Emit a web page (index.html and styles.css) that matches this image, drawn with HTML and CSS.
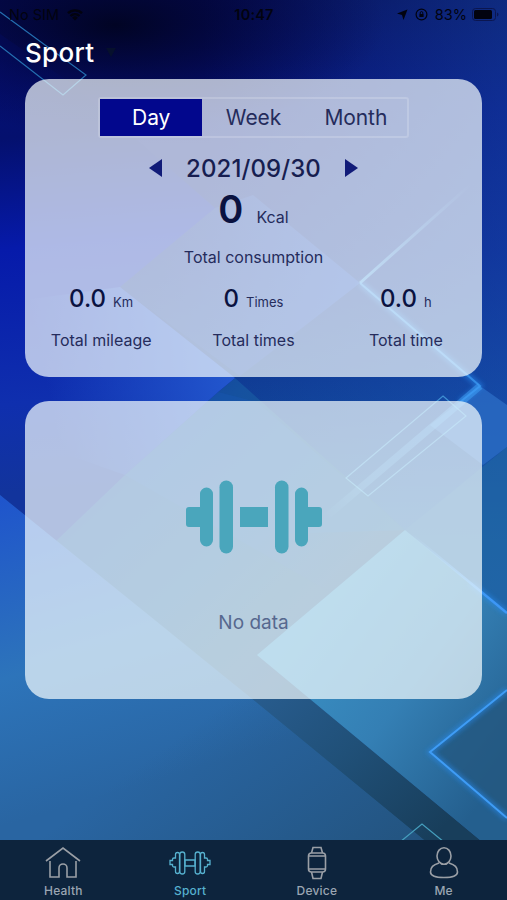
FILE: index.html
```html
<!DOCTYPE html>
<html lang="en">
<head>
  <meta charset="UTF-8" />
  <meta name="viewport" content="width=device-width, initial-scale=1.0" />
  <title>Sport</title>
  <link rel="stylesheet" href="styles.css">
</head>
<body>
  <svg class="backdrop" viewBox="0 0 507 900" preserveAspectRatio="none" aria-hidden="true">
    <defs>
      <linearGradient id="base" x1="0" y1="0" x2="0" y2="1">
        <stop offset="0" stop-color="#050a55" />
        <stop offset="0.12" stop-color="#061078" />
        <stop offset="0.28" stop-color="#0a2088" />
        <stop offset="0.45" stop-color="#103f94" />
        <stop offset="0.6" stop-color="#1c619b" />
        <stop offset="0.8" stop-color="#2867a0" />
        <stop offset="1" stop-color="#205078" />
      </linearGradient>
      <linearGradient id="right" x1="0" y1="0" x2="1" y2="0">
        <stop offset="0.4" stop-color="#1d62c5" stop-opacity="0" />
        <stop offset="1" stop-color="#1d5cc0" stop-opacity="0.4" />
      </linearGradient>
      <radialGradient id="night">
        <stop offset="0" stop-color="#010424" />
        <stop offset="1" stop-color="#020640" stop-opacity="0" />
      </radialGradient>
      <linearGradient id="violet" x1="0" y1="50" x2="40" y2="490" gradientUnits="userSpaceOnUse">
        <stop offset="0" stop-color="#050f7a" />
        <stop offset="0.2" stop-color="#04106e" />
        <stop offset="0.45" stop-color="#061aaa" />
        <stop offset="0.8" stop-color="#0f2fae" />
        <stop offset="1" stop-color="#12349c" />
      </linearGradient>
      <linearGradient id="mid" x1="50" y1="400" x2="235" y2="360" gradientUnits="userSpaceOnUse">
        <stop offset="0" stop-color="#2358cf" stop-opacity="0" />
        <stop offset="1" stop-color="#2358cf" />
      </linearGradient>
      <linearGradient id="centre" x1="130" y1="0" x2="350" y2="0" gradientUnits="userSpaceOnUse">
        <stop offset="0" stop-color="#1742b8" stop-opacity="0.1" />
        <stop offset="1" stop-color="#1a48c4" />
      </linearGradient>
      <linearGradient id="steel" x1="60" y1="400" x2="280" y2="640" gradientUnits="userSpaceOnUse">
        <stop offset="0" stop-color="#12349c" />
        <stop offset="0.35" stop-color="#15519f" />
        <stop offset="1" stop-color="#1f6494" />
      </linearGradient>
      <linearGradient id="low" x1="0" y1="500" x2="90" y2="800" gradientUnits="userSpaceOnUse">
        <stop offset="0" stop-color="#1f55cc" />
        <stop offset="0.55" stop-color="#2d74ba" />
        <stop offset="1" stop-color="#2965a2" />
      </linearGradient>
      <linearGradient id="lowShade" x1="230" y1="700" x2="360" y2="880" gradientUnits="userSpaceOnUse">
        <stop offset="0" stop-color="#235480" stop-opacity="0" />
        <stop offset="1" stop-color="#235480" />
      </linearGradient>
      <linearGradient id="band" x1="190" y1="590" x2="430" y2="840" gradientUnits="userSpaceOnUse">
        <stop offset="0" stop-color="#285c8e" stop-opacity="0" />
        <stop offset="0.35" stop-color="#285c8e" />
        <stop offset="0.65" stop-color="#205078" />
        <stop offset="1" stop-color="#183e5b" />
      </linearGradient>
      <linearGradient id="aqua" x1="290" y1="640" x2="490" y2="790" gradientUnits="userSpaceOnUse">
        <stop offset="0" stop-color="#3a91c5" />
        <stop offset="0.5" stop-color="#347fb4" />
        <stop offset="1" stop-color="#245f8e" />
      </linearGradient>
      <linearGradient id="beam" x1="470" y1="185" x2="360" y2="283" gradientUnits="userSpaceOnUse">
        <stop offset="0" stop-color="#4da3ea" stop-opacity="0" />
        <stop offset="1" stop-color="#4da3ea" stop-opacity="0.8" />
      </linearGradient>
      <linearGradient id="tail" x1="480" y1="386" x2="325" y2="518" gradientUnits="userSpaceOnUse">
        <stop offset="0" stop-color="#3f9ff5" />
        <stop offset="0.7" stop-color="#4fa5e6" stop-opacity="0.7" />
        <stop offset="1" stop-color="#5bb5ee" stop-opacity="0" />
      </linearGradient>
      <linearGradient id="edge" x1="410" y1="533" x2="507" y2="613" gradientUnits="userSpaceOnUse">
        <stop offset="0" stop-color="#4aa8fb" stop-opacity="0" />
        <stop offset="0.8" stop-color="#3d97f6" />
      </linearGradient>
      <filter id="glow" x="-30%" y="-30%" width="160%" height="160%">
        <feGaussianBlur stdDeviation="2.5" />
      </filter>
    </defs>

    <rect width="507" height="900" fill="url(#base)" />
    <rect width="507" height="900" fill="url(#right)" />

    <!-- lower card facets -->
    <path d="M0 420 218 392 235 378 405 530 257 655 424 840 250 697 0 495Z" fill="url(#steel)" />
    <path d="M218 392 257 402 405 530 330 592 125 475Z" fill="#1c5cc0" opacity="0.25" />

    <!-- left facets -->
    <path d="M0 34 75 86 215 208 120 287 235 378 218 392 125 475 56 541 0 495Z" fill="url(#violet)" />
    <path d="M120 287 235 378 218 392 125 475 25 440V300Z" fill="url(#mid)" />
    <ellipse cx="115" cy="25" rx="270" ry="110" fill="url(#night)" />

    <!-- centre facets -->
    <path d="M215 208 253 195 360 283 240 376 120 287Z" fill="url(#centre)" opacity="0.7" />
    <path d="M480 386 507 405V447L483 465 430 425Z" fill="#2a6cc4" opacity="0.8" />
    <path d="M507 447V613L405 530Z" fill="#2267a4" opacity="0.6" />

    <!-- lower facets -->
    <path d="M0 495 250 697 424 840V900H0Z" fill="url(#low)" />
    <path d="M0 495 250 697 424 840V900H0Z" fill="url(#lowShade)" />
    <path d="M56 541 405 530 257 655 480 840V900H424V840L250 697Z" fill="url(#band)" />
    <path d="M257 655 405 530 507 613V861L480 840Z" fill="url(#aqua)" />
    <path d="M507 690 430 752 507 818Z" fill="#24577f" opacity="0.8" />

    <!-- light beams -->
    <g fill="none" stroke="#278cf2" stroke-width="5" opacity="0.6" filter="url(#glow)">
      <path d="M360 283 480 386 460 402" />
      <path d="M470 583 507 613" />
      <path d="M507 690 430 752 507 818" />
    </g>
    <path d="M470 185 360 283" fill="none" stroke="url(#beam)" stroke-width="3" />
    <path d="M480 386 325 518" fill="none" stroke="url(#tail)" stroke-width="7" opacity="0.5" />
    <path d="M410 533 507 613" fill="none" stroke="url(#edge)" stroke-width="2.5" />
    <g fill="none" stroke="#3f9cf5" stroke-width="2">
      <path d="M360 283 480 386 460 402" opacity="0.7" />
      <path d="M507 690 430 752 507 818" />
    </g>
    <g fill="none" stroke="#55b5ed" stroke-width="1.2">
      <path d="M0 12 86 75 63 95 0 46" stroke="#246fb0" />
      <path d="M443 396 466 416 368 496 346 478Z" opacity="0.65" />
      <path d="M400 842 422 824 444 842" stroke="#459ebd" />
    </g>
  </svg>

  <div class="status-bar">
    <div class="carrier">
      <span>No SIM</span>
      <svg width="18" height="13" viewBox="0 0 18 13"><path d="M9 12.5 6.2 9.7a4 4 0 0 1 5.6 0Z" /><path d="M4.5 8a6.4 6.4 0 0 1 9 0M2 5.2a10 10 0 0 1 14 0" fill="none" stroke="#02030f" stroke-width="2.4" /></svg>
    </div>
    <div class="time">10:47</div>
    <div class="battery">
      <svg width="11" height="11" viewBox="0 0 11 11"><path d="M10.5.5 6.5 11 5 6 0 4.6Z" /></svg>
      <svg width="13" height="13" viewBox="0 0 13 13"><circle cx="6.5" cy="6.5" r="5.4" fill="none" stroke="#02030f" stroke-width="1.2" /><path d="M4.4 6h4.2v3H4.4Z" /><path d="M5.2 6V4.9a1.3 1.3 0 0 1 2.6 0V6" fill="none" stroke="#02030f" /></svg>
      <span>83%</span>
      <svg class="level" width="27" height="13" viewBox="0 0 27 13"><rect x=".5" y=".5" width="23" height="12" rx="3" fill="none" stroke="#0b1650" /><rect x="2" y="2" width="18" height="9" rx="1.5" /><path d="M25 4.5c2 .8 2 3.2 0 4Z" fill="#0b1650" /></svg>
    </div>
  </div>

  <header>
    <h1>Sport</h1>
    <span class="caret"></span>
  </header>

  <main>
    <section class="card summary">
      <div class="tabs">
        <button class="tab active">Day</button>
        <button class="tab">Week</button>
        <button class="tab">Month</button>
      </div>
      <div class="date-picker">
        <span class="arrow prev"></span>
        <span class="date">2021/09/30</span>
        <span class="arrow next"></span>
      </div>
      <div class="calories"><strong>0</strong><span>Kcal</span></div>
      <p class="label">Total consumption</p>
      <div class="stats">
        <div class="stat">
          <div class="value"><b>0.0</b><span>Km</span></div>
          <p class="label">Total mileage</p>
        </div>
        <div class="stat">
          <div class="value"><b>0</b><span>Times</span></div>
          <p class="label">Total times</p>
        </div>
        <div class="stat">
          <div class="value"><b>0.0</b><span>h</span></div>
          <p class="label">Total time</p>
        </div>
      </div>
    </section>

    <section class="card empty">
      <svg width="136" height="74" viewBox="0 0 136 74" fill="#4aa6bc">
        <path d="M14 27V14a6.5 6.5 0 0 1 13 0v46a6.5 6.5 0 0 1-13 0V47H3a3 3 0 0 1-3-3V30a3 3 0 0 1 3-3Z" />
        <rect x="33.5" y=".5" width="13.5" height="73" rx="6.7" />
        <path d="M54 27h28v20H54Z" />
        <rect x="89" y=".5" width="13.5" height="73" rx="6.7" />
        <path d="M122 27V14a6.5 6.5 0 0 0-13 0v46a6.5 6.5 0 0 0 13 0V47h11a3 3 0 0 0 3-3V30a3 3 0 0 0-3-3Z" />
      </svg>
      <p>No data</p>
    </section>
  </main>

  <nav>
    <a href="#">
      <svg width="36" height="34" viewBox="0 0 36 34"><path d="M1 15 18 2l17 13M5 15v16h9V22a4 4 0 0 1 8 0v9h9V15" /></svg>
      <span>Health</span>
    </a>
    <a href="#" class="current">
      <svg width="42" height="34" viewBox="0 0 42 34"><path d="M10.5 8.5a2 2 0 0 0-4 0V12H5a1.5 1.5 0 0 0-1.5 1.500V14.500H1v4h2.500v1A1.500 1.500 0 0 0 5 21h1.500v4.500a2 2 0 0 0 4 0ZM16 14h10v6H16ZM31.500 8.500a2 2 0 0 1 4 0V12H37a1.500 1.500 0 0 1 1.500 1.500V14.500H41v4h-2.500v1A1.500 1.500 0 0 1 37 21h-1.500v4.500a2 2 0 0 1-4 0Z" /><rect x="10.800" y="6" width="5" height="22" rx="2.500" /><rect x="26.200" y="6" width="5" height="22" rx="2.500" /></svg>
      <span>Sport</span>
    </a>
    <a href="#">
      <svg width="20" height="34" viewBox="0 0 20 34"><path d="M4.500 7 6 1.500h8L15.500 7M4.500 26 6 32.500h8l1.500-6.500" /><rect x="1.500" y="7" width="17" height="19" rx="3" /><path d="M2 10h16M2 23h16" /></svg>
      <span>Device</span>
    </a>
    <a href="#">
      <svg width="30" height="34" viewBox="0 0 30 34"><ellipse cx="15" cy="10" rx="7" ry="8.300" /><path d="M10 17C4 19 1.500 21 1.500 26c0 3.500 5 5.500 13.500 5.500S28.500 29.500 28.500 26c0-5-2.500-7-8.500-9" /></svg>
      <span>Me</span>
    </a>
  </nav>
</body>
</html>
```

FILE: styles.css
```css
* {
  margin: 0;
  padding: 0;
  box-sizing: border-box;
}

body {
  font-family: Inter, 'Liberation Sans', sans-serif;
  height: 100vh;
  overflow: hidden;
  display: flex;
  flex-direction: column;
  color: #252c5c;
  background: #061078;
  position: relative;
}

.backdrop {
  position: absolute;
  inset: 0;
  width: 100%;
  height: 100%;
  z-index: -1;
}

.status-bar {
  height: 28px;
  padding: 0 8px 0 9px;
  display: grid;
  grid-template-columns: 1fr auto 1fr;
  align-items: center;
  font-size: 14.5px;
  color: #02030f;
  fill: #02030f;
}

.carrier,
.battery {
  display: flex;
  align-items: center;
  gap: 7px;
}

.battery {
  justify-content: flex-end;
}

.battery .level {
  margin-left: -2px;
}

.time {
  font-weight: 600;
  letter-spacing: 0.2px;
}

header {
  height: 51px;
  padding: 0 25px 2px;
  display: flex;
  align-items: center;
  gap: 12px;
  color: #fff;
}

header h1 {
  font-size: 26px;
  font-weight: 500;
  letter-spacing: 0.3px;
}

.caret {
  border: 5px solid transparent;
  border-top: 9px solid #06102c;
  border-bottom: 0;
}

main {
  flex: 1;
  padding: 0 25px;
}

.card {
  height: 298px;
  border-radius: 24px;
  background: rgba(246, 253, 255, 0.7);
}

.summary {
  padding-top: 18px;
  margin-bottom: 24px;
  text-align: center;
}

.tabs {
  display: flex;
  width: 311px;
  height: 41px;
  margin: 0 auto;
  border: 2px solid rgba(255, 255, 255, 0.18);
  border-radius: 3px;
}

.tab {
  flex: 1;
  border: 0;
  background: none;
  font: 400 21px Inter, sans-serif;
  letter-spacing: -0.1px;
  color: inherit;
}

.tab.active {
  background: #02078d;
  color: #fff;
}

.date-picker {
  height: 41px;
  margin-top: 9px;
  padding-top: 1px;
  display: flex;
  align-items: center;
  justify-content: center;
  gap: 24px;
}

.date {
  font-size: 24px;
  font-weight: 500;
  letter-spacing: 0.1px;
  color: #171e50;
}

.arrow {
  border: 9px solid transparent;
}

.prev {
  border-left: 0;
  border-right: 13px solid #111b78;
}

.next {
  border-right: 0;
  border-left: 13px solid #111b78;
}

.calories {
  height: 59px;
  display: flex;
  justify-content: center;
  align-items: baseline;
  gap: 13px;
  line-height: 42px;
}

.calories strong {
  font-size: 38px;
  font-weight: 600;
  color: #0a1240;
}

.calories span {
  font-size: 16px;
}

.label {
  font-size: 16px;
  line-height: 20px;
}

.stats {
  display: grid;
  grid-template-columns: repeat(3, 1fr);
  margin-top: 16px;
}

.value {
  line-height: 32px;
  margin-bottom: 12px;
}

.value b {
  font-size: 24px;
  font-weight: 500;
  color: #0a1240;
}

.value span {
  font-size: 13px;
  margin-left: 7px;
}

.empty {
  display: flex;
  flex-direction: column;
  align-items: center;
  padding-top: 79px;
}

.empty p {
  margin-top: 57px;
  font-size: 19px;
  line-height: 24px;
  color: #56688e;
}

nav {
  height: 60px;
  padding-top: 6px;
  display: grid;
  grid-template-columns: repeat(4, 1fr);
  background: #0d243d;
}

nav a {
  display: flex;
  flex-direction: column;
  align-items: center;
  gap: 3px;
  font-size: 12px;
  font-weight: 500;
  line-height: 15px;
  letter-spacing: 0.2px;
  color: #9ba6b3;
  text-decoration: none;
}

nav svg {
  fill: none;
  stroke: #9a9fa6;
  stroke-width: 1.6;
}

nav .current {
  color: #56b1cf;
}

nav .current svg {
  stroke: #56b1cf;
  stroke-width: 1.3;
}
```
